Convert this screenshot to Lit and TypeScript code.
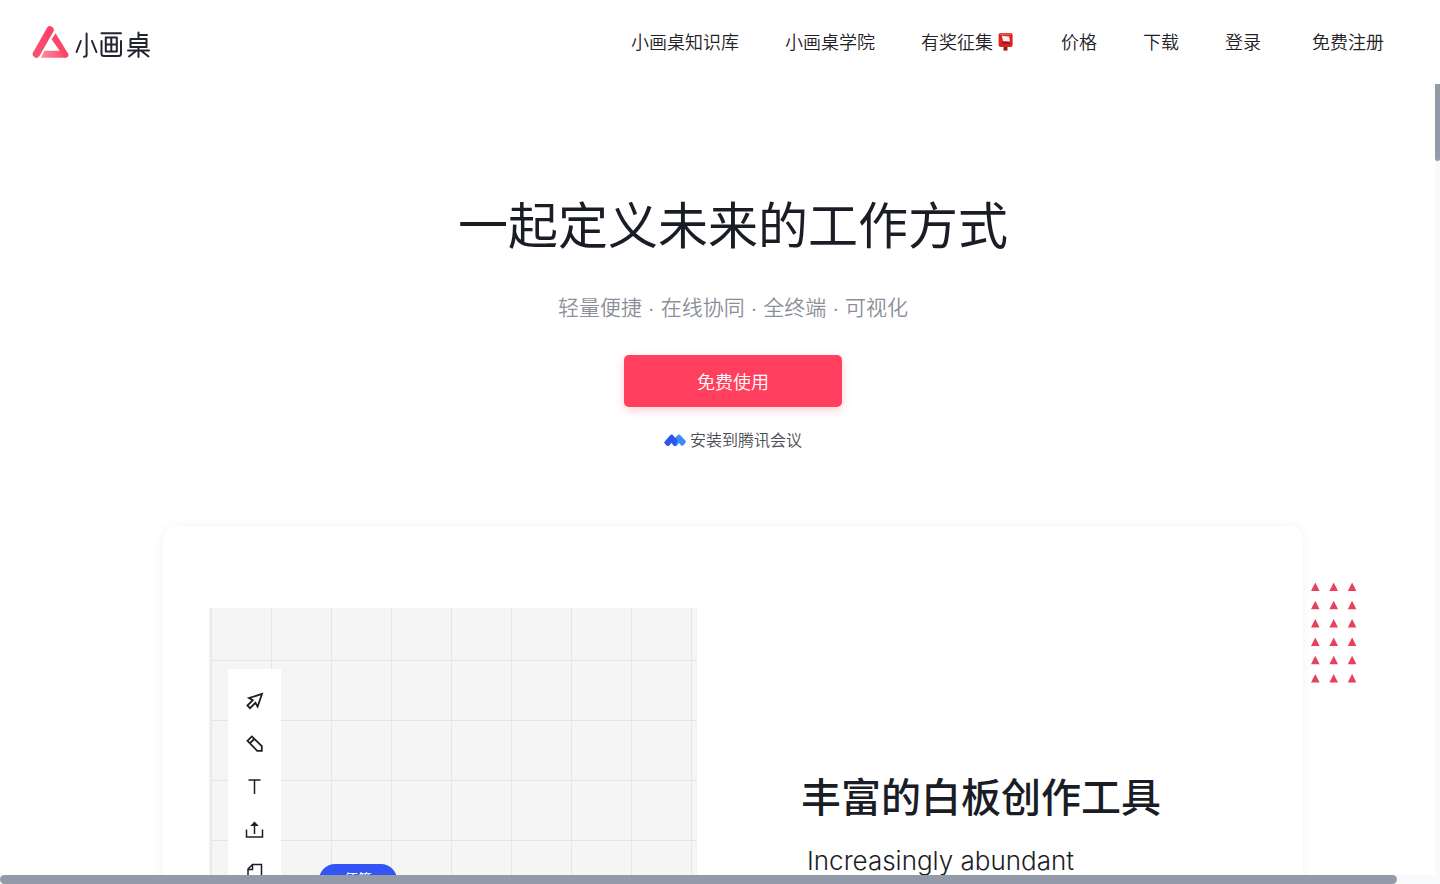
import { LitElement, html, css, svg } from "lit";
import { customElement } from "lit/decorators.js";

const NAV = ["小画桌知识库", "小画桌学院", "有奖征集", "价格", "下载", "登录", "免费注册"];

const TOOLS = [
  {
    name: "选择",
    icon: svg`<path d="M17 3 12.6 15.6 10.4 11.8 5 17.2 2.4 14.6 7.8 9.2 4 7Z"/>`,
  },
  {
    name: "画笔",
    icon: svg`<path d="M2.4 6.8 6.8 2.4 16.8 12.2 16.8 16.8 12.2 16.8Z M5 9.2 9.2 5"/>`,
  },
  { name: "文本", icon: svg`<path class="thin" d="M3.5 3H15.5M9.5 3V17"/>` },
  {
    name: "上传",
    icon: svg`<path class="thin" d="M1.5 9.5V17H17.5V9.5M9.5 14V5"/><path class="solid" d="M9.5 1.4 13.8 6H5.2Z"/>`,
  },
  {
    name: "便签",
    icon: svg`<path class="thin" d="M7.5 1.5H16.5V17.5H3V6Z M3 6.5H7.5V1.5"/>`,
  },
];

@customElement("app-root")
export class AppRoot extends LitElement {
  static styles = css`
    :host {
      display: block;
      font-family: "Noto Sans CJK SC", "Noto Sans", sans-serif;
      color: #1b1d26;
      background: #fff;
    }
    * {
      box-sizing: border-box;
    }
    a {
      color: inherit;
      text-decoration: none;
    }
    h1,
    h2,
    p {
      margin: 0;
    }
    .page {
      position: relative;
      height: 100vh;
      overflow: hidden;
    }
    .header {
      display: flex;
      align-items: center;
      justify-content: space-between;
      height: 84px;
      padding: 0 56px 0 32px;
    }
    .logo {
      display: block;
    }
    .logo svg {
      display: block;
    }
    .logo .ink {
      fill: none;
      stroke: #23252e;
      stroke-width: 2;
      stroke-linecap: round;
      stroke-linejoin: round;
    }
    .nav {
      display: flex;
      align-items: center;
      gap: 46px;
      padding-bottom: 2px;
      font-size: 18px;
      line-height: 28px;
      font-weight: 350;
      color: #1f2127;
    }
    .link {
      display: flex;
      align-items: center;
      gap: 4px;
    }
    .link:last-child {
      margin-left: 5px;
    }
    .main {
      padding-left: 26px;
    }
    .hero {
      display: flex;
      flex-direction: column;
      align-items: center;
      padding-top: 102px;
    }
    .title {
      font-size: 50px;
      line-height: 72px;
      font-weight: 400;
    }
    .sub {
      margin-top: 35px;
      font-family: "Liberation Sans", "Noto Sans CJK SC", sans-serif;
      font-size: 21px;
      line-height: 30px;
      font-weight: 350;
      color: #8c8f99;
    }
    .cta {
      margin-top: 32px;
      width: 218px;
      height: 52px;
      border: 0;
      border-radius: 5px;
      background: #ff3f5d;
      box-shadow: 0 3px 10px rgba(255, 63, 93, 0.25);
      color: #fff;
      font: 350 18px/28px "Noto Sans CJK SC", sans-serif;
    }
    .install {
      display: flex;
      align-items: center;
      gap: 4px;
      margin-top: 20px;
      font-size: 16px;
      line-height: 24px;
      font-weight: 350;
      color: #4b4d54;
    }
    .card {
      position: relative;
      display: flex;
      gap: 104px;
      max-width: 1140px;
      margin: 75px auto 0;
      padding: 82px 46px;
      border-radius: 14px;
      background: #fff;
      box-shadow: 0 0 12px rgba(0, 0, 0, 0.05);
    }
    .board {
      position: relative;
      flex: 0 0 488px;
      height: 488px;
      padding: 61px 19px;
      border-left: 2px solid #f0f0f0;
      background-color: #f5f5f5;
      background-image: linear-gradient(90deg, #e5e5e5 1px, transparent 1px),
        linear-gradient(#e5e5e5 1px, transparent 1px);
      background-size: 60px 60px;
      background-position: 60px 52px;
    }
    .tools {
      display: flex;
      flex-direction: column;
      align-items: center;
      gap: 23px;
      width: 53px;
      margin-left: -2px;
      padding: 22px 0;
      background: #fff;
    }
    .tool {
      display: block;
      height: 20px;
      padding: 0;
      border: 0;
      background: none;
    }
    .tool svg {
      display: block;
      fill: none;
      stroke: #1d1f24;
      stroke-width: 1.8;
    }
    .tool .thin {
      stroke-width: 1.5;
    }
    .tool .solid {
      fill: #1d1f24;
      stroke: none;
    }
    .note {
      position: absolute;
      left: 108px;
      top: 256px;
      padding: 3px 25px 7px;
      border-radius: 16px;
      background: #3355f5;
      color: #fff;
      font-size: 14px;
      line-height: 22px;
    }
    .copy {
      padding-top: 158px;
    }
    .copy-title {
      font-size: 40px;
      line-height: 58px;
      font-weight: 500;
      white-space: nowrap;
    }
    .copy-text {
      max-width: 300px;
      margin-top: 17px;
      padding-left: 6px;
      font: 300 26px/40px Inter, "Liberation Sans", sans-serif;
    }
    .dots {
      position: absolute;
      left: calc(100% + 7px);
      top: 56px;
    }
    .vtrack {
      position: absolute;
      top: 84px;
      right: 0;
      bottom: 0;
      width: 5px;
      background: #f9fafb;
    }
    .vthumb {
      height: 77px;
      border-radius: 0 0 4px 4px;
      background: #929ba7;
    }
    .htrack {
      position: absolute;
      left: 0;
      right: 0;
      bottom: 0;
      background: #f9fafb;
    }
    .hthumb {
      width: 97%;
      height: 9px;
      border-radius: 5px;
      background: #929ba7;
    }
  `;

  private logo() {
    return html`<svg width="120" height="36" viewBox="0 0 120 36">
      <defs>
        <linearGradient id="lg-a" x1="1" y1="0" x2="0" y2="1">
          <stop offset="0" stop-color="#ff3f61" />
          <stop offset="1" stop-color="#f65273" />
        </linearGradient>
        <linearGradient id="lg-b" x1="0" y1="0" x2="1" y2="0">
          <stop offset="0" stop-color="#fb8ba0" />
          <stop offset="1" stop-color="#fb4263" />
        </linearGradient>
      </defs>
      <path d="M4.4 30 18 6" stroke="url(#lg-a)" stroke-width="7.4" stroke-linecap="round" />
      <path d="M12.4 26.8H29.5Q35 26.8 36.2 30.3 36 33.8 32.5 33.8H9Z" fill="url(#lg-b)" />
      <path d="M23.6 9.2 36 29.6Q37.6 33.8 32.5 33.8L27.6 26.8 19.6 15.2Z" fill="#fa4768" />
      <g class="ink">
        <path d="M54.6 9.5V31Q54.6 32.7 52 32.7M48.8 17 44.6 28M60 17 64.4 28" />
        <path d="M69.5 9.3H89M69.5 17V29.5Q69.5 32 72 32H86.5Q89 32 89 29.5V17M73.8 13.5H84.8V27.5H73.8ZM79.3 13.5V27.5M73.8 20.5H84.8" />
        <path d="M106.5 8.5V15M106.5 11H115M98.5 15H114.5V23H98.5ZM98.5 19H114.5M96 26.5H117M106.5 23V33M104 27 97 32.5M109.5 27 116.5 32.5" />
      </g>
    </svg>`;
  }

  private postbox() {
    return html`<svg width="18" height="20" viewBox="0 0 18 20" aria-hidden="true">
      <rect x="6.5" y="14" width="4" height="5.6" fill="#9c1716" />
      <rect x="1.6" y="2" width="14" height="14" rx="2" fill="#d8231f" />
      <path d="M3 3.2H14.2" stroke="#f0655b" stroke-width="1.4" />
      <path d="M4.8 4.8 12.2 5.4 13 10.6 6 10Z" fill="#f6eeee" />
      <path d="M5 12H13" stroke="#8f1615" stroke-width="1.4" />
    </svg>`;
  }

  private meeting() {
    return html`<svg width="22" height="16" viewBox="0 -1 22 16" aria-hidden="true">
      <path
        d="M8 9.2 13.6 3.2Q15 1.8 16.4 3.2L21.3 8.6Q22.3 9.8 21.3 11L19.4 13.2Q18.2 14.4 17 13.2L15 11 13 13.4Q11.4 15 10 13.4Z"
        fill="#3b8cf4"
      />
      <path
        d="M.7 9.4 6.2 3.2Q7.6 1.8 9 3.2L13.5 8.2 11.6 13.8Q10.6 14.6 9.6 13.4L7.5 11 5.3 13.4Q3.9 14.8 2.5 13.4L.7 11.4Q-.1 10.4.7 9.4Z"
        fill="#3054ee"
      />
    </svg>`;
  }

  private triangles() {
    const cells = Array.from({ length: 18 }, (_, i) => {
      const x = 1 + (i % 3) * 18.4;
      const y = 1 + Math.floor(i / 3) * 18.3;
      return svg`<path d="M${x + 4.3} ${y - 0.5}L${x + 8.6} ${y + 8}H${x}Z"/>`;
    });
    return html`<svg class="dots" width="48" height="102" viewBox="0 0 48 102" fill="#e8405f" aria-hidden="true">
      ${cells}
    </svg>`;
  }

  render() {
    return html`
      <div class="page">
        <header class="header">
          <a class="logo" href="#" aria-label="小画桌">${this.logo()}</a>
          <nav class="nav">
            ${NAV.map(
              (label) => html`<a class="link" href="#">${label}${label === "有奖征集" ? this.postbox() : null}</a>`
            )}
          </nav>
        </header>
        <main class="main">
          <section class="hero">
            <h1 class="title">一起定义未来的工作方式</h1>
            <p class="sub">轻量便捷 · 在线协同 · 全终端 · 可视化</p>
            <button class="cta">免费使用</button>
            <a class="install" href="#">${this.meeting()}安装到腾讯会议</a>
          </section>
          <section class="card">
            <div class="board">
              <div class="tools">
                ${TOOLS.map(
                  (t) => html`<button class="tool" aria-label=${t.name}>
                    <svg width="19" height="20" viewBox="0 0 19 20">${t.icon}</svg>
                  </button>`
                )}
              </div>
              <span class="note">便签</span>
            </div>
            <div class="copy">
              <h2 class="copy-title">丰富的白板创作工具</h2>
              <p class="copy-text">Increasingly abundant</p>
            </div>
            ${this.triangles()}
          </section>
        </main>
        <div class="vtrack" aria-hidden="true"><div class="vthumb"></div></div>
        <div class="htrack" aria-hidden="true"><div class="hthumb"></div></div>
      </div>
    `;
  }
}
